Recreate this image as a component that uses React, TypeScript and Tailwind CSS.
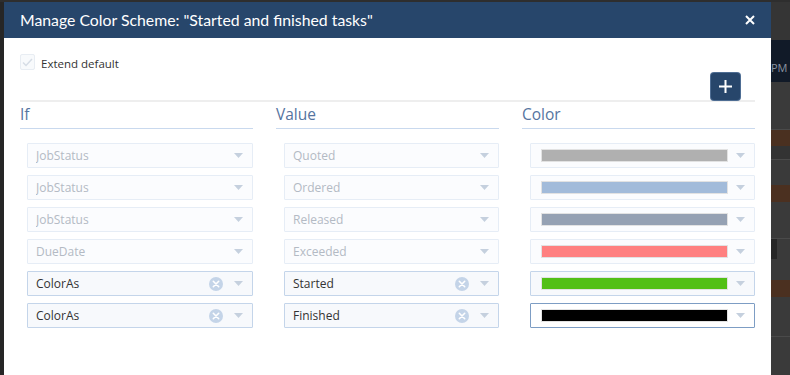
import React from "react";

type Row = {
  field: string;
  value: string;
  color: string;
  active?: boolean;
  focused?: boolean;
};

const rows: Row[] = [
  { field: "JobStatus", value: "Quoted", color: "#b0b0b0" },
  { field: "JobStatus", value: "Ordered", color: "#a2bbda" },
  { field: "JobStatus", value: "Released", color: "#95a1b3" },
  { field: "DueDate", value: "Exceeded", color: "#ff8080" },
  { field: "ColorAs", value: "Started", color: "#52c016", active: true },
  { field: "ColorAs", value: "Finished", color: "#000000", active: true, focused: true },
];

function Caret() {
  return (
    <svg width="9" height="5" viewBox="0 0 9 5" className="shrink-0">
      <path d="M0 0h9L4.5 5z" fill="#c5d0de" />
    </svg>
  );
}

function ClearIcon() {
  return (
    <svg width="14" height="14" viewBox="0 0 14 14" className="shrink-0">
      <circle cx="7" cy="7" r="7" fill="#c4d4e8" />
      <path d="M4.3 4.3l5.4 5.4M9.7 4.3l-5.4 5.4" stroke="#fff" strokeWidth="1.6" strokeLinecap="round" />
    </svg>
  );
}

function Select({ text, active }: { text: string; active?: boolean }) {
  return (
    <div
      className={`flex h-[25px] items-center rounded-[1px] border pl-[8px] pr-[9px] text-[12px] ${
        active ? "border-[#c4d5ea] bg-[#f7f9fc] text-[#333]" : "border-[#e6edf6] bg-[#fbfcfe] text-[#b3bac4]"
      }`}
    >
      <span className="flex-1 truncate">{text}</span>
      {active && (
        <span className="mr-[11px]">
          <ClearIcon />
        </span>
      )}
      <Caret />
    </div>
  );
}

function ColorSelect({ color, active, focused }: { color: string; active?: boolean; focused?: boolean }) {
  return (
    <div
      className={`flex h-[25px] items-center rounded-[1px] border pl-[10px] pr-[9px] ${
        focused
          ? "border-[#7d9dc4] bg-white"
          : active
          ? "border-[#c4d5ea] bg-[#f7f9fc]"
          : "border-[#e6edf6] bg-[#fbfcfe]"
      }`}
    >
      <div className="h-[13px] flex-1 border border-[#e2e2e2]" style={{ backgroundColor: color }} />
      <span className="ml-[8px]">
        <Caret />
      </span>
    </div>
  );
}

function Background() {
  return (
    <div className="flex w-[19px] flex-col bg-[#3a3a3a]">
      <div className="h-[38px] bg-[#353535]" />
      <div className="flex h-[42px] items-end bg-[#111a28] pb-[6px] text-[11px] text-[#8a93a0]">PM</div>
      <div className="h-[48px] border-b border-[#4a4a4a]" />
      <div className="h-[16px] bg-[#4a3020]" />
      <div className="h-[14px] border-b border-[#4a4a4a] bg-[#333]" />
      <div className="h-[25px]" />
      <div className="h-[17px] bg-[#4b3020]" />
      <div className="h-[37px] border-b border-[#4a4a4a]" />
      <div className="h-[20px] w-[6px] bg-[#262626]" />
      <div className="h-[21px]" />
      <div className="h-[17px] bg-[#4b3020]" />
      <div className="h-[40px] border-b border-[#4a4a4a]" />
      <div className="flex-1" />
    </div>
  );
}

export default function App() {
  return (
    <div
      className="flex h-[375px] w-[790px] overflow-hidden bg-[#2e2e2e] pt-[2px]"
      style={{ fontFamily: '"Open Sans", "Noto Sans", sans-serif' }}
    >
      <div className="w-[4px] bg-[#262626]" />
      <div className="flex w-[767px] flex-col bg-white">
        <div className="flex h-[36px] items-center justify-between bg-[#27466b] pl-[16px] pr-[16px]">
          <h1 className="font-['Lato',sans-serif] text-[15.8px] text-white">
            Manage Color Scheme: "Started and finished tasks"
          </h1>
          <svg width="10" height="10" viewBox="0 0 10 10">
            <path d="M1 1l8 8M9 1l-8 8" stroke="#fff" strokeWidth="2" />
          </svg>
        </div>
        <div className="px-[16px] pt-[16px]">
          <label className="flex h-[16px] items-center gap-[6px] text-[11.5px] leading-[16px] text-[#333]">
            <span className="flex h-[16px] w-[15px] items-center justify-center rounded-[2px] border border-[#e8edf3] bg-[#f8fafc]">
              <svg width="11" height="9" viewBox="0 0 11 9">
                <path d="M1 4.5l3 3L10 1" fill="none" stroke="#d6dde6" strokeWidth="1.5" />
              </svg>
            </span>
            <span className="pt-[4px]">Extend default</span>
          </label>
          <div className="mt-[3px] flex justify-end pr-[15px]">
            <button className="flex h-[27px] w-[29px] items-center justify-center rounded-[3px] bg-[#27466b] shadow-[0_0_0_1px_#4e6d93]">
              <svg width="15" height="15" viewBox="0 0 15 15">
                <path d="M7.5 1v13M1 7.5h13" stroke="#fff" strokeWidth="2" />
              </svg>
            </button>
          </div>
          <div className="h-[2px] bg-[#eeeeee]" />
          <div className="mt-[2px] grid grid-cols-[233px_223px_233px] gap-x-[23px]">
            {["If", "Value", "Color"].map((h) => (
              <div key={h} className="border-b border-[#c9d9ee] pb-[4px] text-[15.5px] leading-[20px] text-[#5574a0]">
                {h}
              </div>
            ))}
          </div>
          <div className="mt-[14px] flex flex-col gap-[7px]">
            {rows.map((r, i) => (
              <div key={i} className="grid grid-cols-[233px_223px_233px] gap-x-[23px]">
                <div className="pl-[7px]">
                  <Select text={r.field} active={r.active} />
                </div>
                <div className="pl-[8px]">
                  <Select text={r.value} active={r.active} />
                </div>
                <div className="pl-[8px]">
                  <ColorSelect color={r.color} active={r.active} focused={r.focused} />
                </div>
              </div>
            ))}
          </div>
        </div>
      </div>
      <Background />
    </div>
  );
}
